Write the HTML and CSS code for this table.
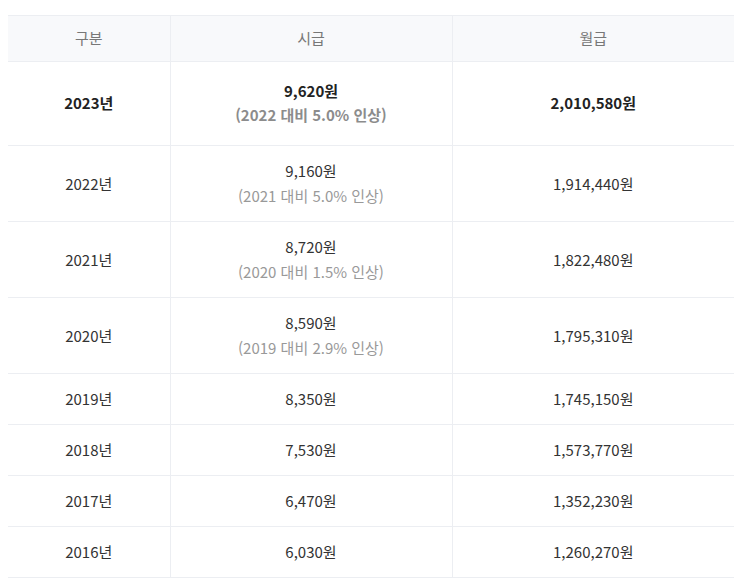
FILE: index.html
```html
<!DOCTYPE html>
<html lang="ko">
<head>
    <meta charset="UTF-8">
    <meta name="viewport" content="width=device-width, initial-scale=1.0">
    <title>최저임금</title>
    <link rel="stylesheet" href="styles.css">
</head>
<body>
    <div class="wage-wrap">
        <table class="wage-table">
            <colgroup>
                <col class="col-year">
                <col class="col-hour">
                <col class="col-month">
            </colgroup>
            <thead>
                <tr>
                    <th>구분</th>
                    <th>시급</th>
                    <th>월급</th>
                </tr>
            </thead>
            <tbody>
                <tr class="current">
                    <td>2023년</td>
                    <td>9,620원<span class="note">(2022 대비 5.0% 인상)</span></td>
                    <td>2,010,580원</td>
                </tr>
                <tr>
                    <td>2022년</td>
                    <td>9,160원<span class="note">(2021 대비 5.0% 인상)</span></td>
                    <td>1,914,440원</td>
                </tr>
                <tr>
                    <td>2021년</td>
                    <td>8,720원<span class="note">(2020 대비 1.5% 인상)</span></td>
                    <td>1,822,480원</td>
                </tr>
                <tr>
                    <td>2020년</td>
                    <td>8,590원<span class="note">(2019 대비 2.9% 인상)</span></td>
                    <td>1,795,310원</td>
                </tr>
                <tr>
                    <td>2019년</td>
                    <td>8,350원</td>
                    <td>1,745,150원</td>
                </tr>
                <tr>
                    <td>2018년</td>
                    <td>7,530원</td>
                    <td>1,573,770원</td>
                </tr>
                <tr>
                    <td>2017년</td>
                    <td>6,470원</td>
                    <td>1,352,230원</td>
                </tr>
                <tr>
                    <td>2016년</td>
                    <td>6,030원</td>
                    <td>1,260,270원</td>
                </tr>
            </tbody>
        </table>
    </div>
</body>
</html>
```

FILE: styles.css
```css
* {
    margin: 0;
    padding: 0;
    box-sizing: border-box;
}

body {
    font-family: "Noto Sans CJK KR", "Noto Sans", sans-serif;
    background: #fff;
    color: #333;
}

.wage-wrap {
    padding: 15px 21px 0 8px;
}

.wage-table {
    width: 726px;
    border-collapse: collapse;
    font-size: 15px;
    text-align: center;
}

.col-year { width: 162px; }
.col-hour { width: 282px; }
.col-month { width: 282px; }

.wage-table th,
.wage-table td {
    border-top: 1px solid #eceef2;
    border-bottom: 1px solid #eceef2;
    border-left: 1px solid #eceef2;
    vertical-align: middle;
}

.wage-table th:first-child,
.wage-table td:first-child {
    border-left: none;
}

.wage-table th {
    height: 46px;
    padding-bottom: 3px;
    background: #f8f9fb;
    color: #777;
    font-weight: 400;
}

.wage-table td {
    padding: 12px 0 13px;
    line-height: 25px;
}

.note {
    display: block;
    color: #999;
}

.current td {
    padding: 17px 0 18px;
    font-weight: 700;
    line-height: 24px;
    color: #222;
}

.current .note {
    color: #8c8c8c;
}
```
